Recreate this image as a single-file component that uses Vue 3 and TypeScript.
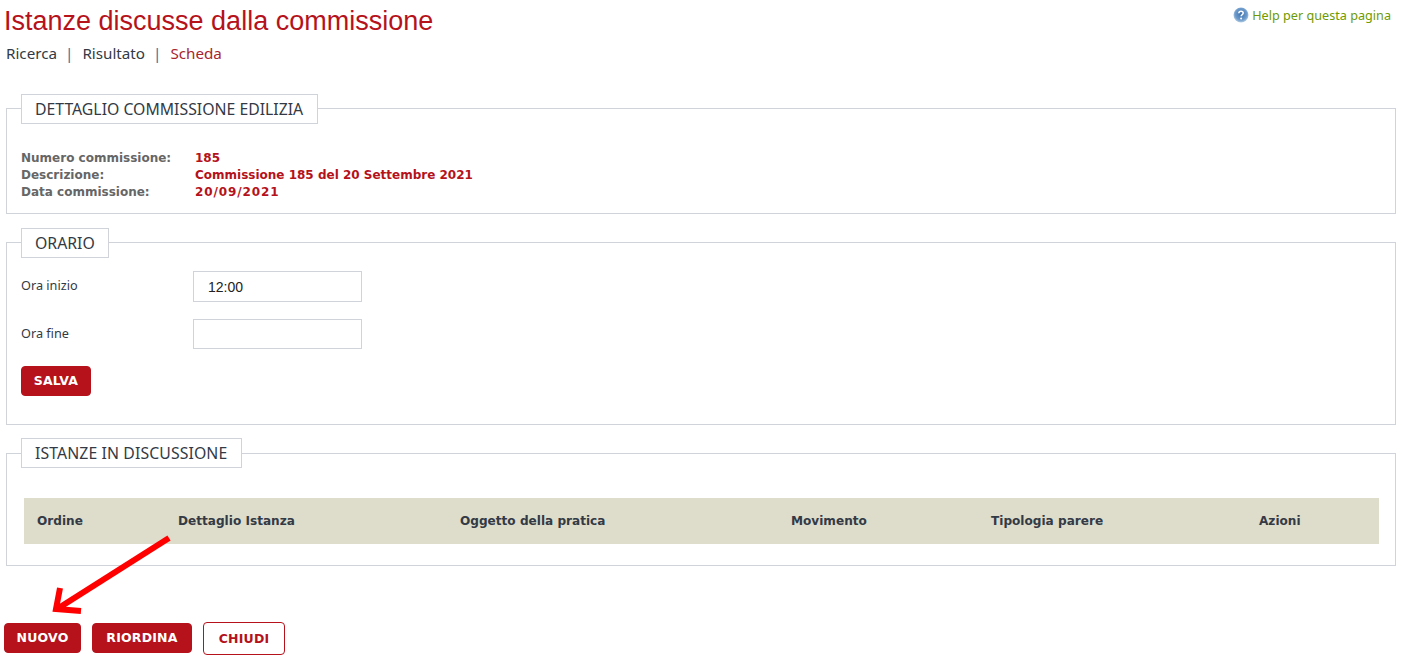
<script setup lang="ts">
interface Info { label: string; value: string }
const info: Info[] = [
  { label: 'Numero commissione:', value: '185' },
  { label: 'Descrizione:', value: 'Commissione 185 del 20 Settembre 2021' },
  { label: 'Data commissione:', value: '20/09/2021' },
]
const columns: string[] = ['Ordine', 'Dettaglio Istanza', 'Oggetto della pratica', 'Movimento', 'Tipologia parere', 'Azioni']
</script>

<template>
  <div class="page">
    <header class="top">
      <h1>Istanze discusse dalla commissione</h1>
      <a class="help">
        <svg width="16" height="16" viewBox="0 0 16 16">
          <defs>
            <radialGradient id="hg" cx="50%" cy="45%" r="55%">
              <stop offset="0" stop-color="#3f73ad" />
              <stop offset="0.7" stop-color="#6d9bcb" />
              <stop offset="1" stop-color="#b4cde4" />
            </radialGradient>
          </defs>
          <circle cx="8" cy="8" r="7.5" fill="url(#hg)" />
          <path d="M5.8 6.2C5.9 4.9 6.8 4.2 8 4.2s2.2.7 2.2 1.9c0 1-.6 1.4-1.2 1.8-.5.3-.8.6-.8 1.3" fill="none" stroke="#fff" stroke-width="1.5" />
          <circle cx="8.1" cy="11.6" r="1" fill="#fff" />
        </svg>
        Help per questa pagina
      </a>
    </header>
    <nav class="crumbs">
      <span>Ricerca</span><i>|</i><span>Risultato</span><i>|</i><span class="current">Scheda</span>
    </nav>

    <fieldset class="box detail">
      <legend>DETTAGLIO COMMISSIONE EDILIZIA</legend>
      <dl>
        <div v-for="row in info" :key="row.label" class="info-row">
          <dt>{{ row.label }}</dt>
          <dd>{{ row.value }}</dd>
        </div>
      </dl>
    </fieldset>

    <fieldset class="box orario">
      <legend>ORARIO</legend>
      <div class="field first">
        <label>Ora inizio</label>
        <input type="text" value="12:00" />
      </div>
      <div class="field second">
        <label>Ora fine</label>
        <input type="text" class="short" value="" />
      </div>
      <button class="btn solid salva">SALVA</button>
    </fieldset>

    <fieldset class="box istanze">
      <legend>ISTANZE IN DISCUSSIONE</legend>
      <div class="thead">
        <div v-for="c in columns" :key="c">{{ c }}</div>
      </div>
    </fieldset>

    <div class="actions">
      <button class="btn solid nuovo">NUOVO</button>
      <button class="btn solid riordina">RIORDINA</button>
      <button class="btn outline">CHIUDI</button>
    </div>

    <svg class="arrow" width="200" height="100" viewBox="0 0 200 100">
      <path d="M169 4 L57 75" stroke="#fe0000" stroke-width="6" fill="none" />
      <path d="M60 54 L56 75 L81 77" stroke="#fe0000" stroke-width="6" fill="none" />
    </svg>
  </div>
</template>

<style>
html, body { margin: 0; background: #fff; }
</style>

<style scoped>
.page {
  position: relative;
  box-sizing: border-box;
  width: 1403px;
  height: 667px;
  overflow: hidden;
  padding: 0 7px 0 6px;
  font-family: Tahoma, "Noto Sans", "DejaVu Sans", sans-serif;
  color: #333a45;
}
.top {
  display: flex;
  justify-content: space-between;
  align-items: flex-start;
  height: 39px;
  margin-left: -2px;
}
h1 {
  margin: 5px 0 0;
  font: 400 27px/32px "Liberation Sans", Arial, sans-serif;
  color: #b5121b;
}
.help {
  display: flex;
  align-items: center;
  gap: 3px;
  margin: 7px 5px 0 0;
  font-size: 12.65px;
  line-height: 16px;
  color: #6f9a00;
}
.crumbs {
  display: flex;
  height: 28px;
  align-items: center;
  font-size: 15.2px;
  line-height: 20px;
}
.crumbs i { font-style: normal; margin: 0 10px 0 8px; color: #2f6f9f; }
.crumbs i + span { margin-left: -1px; }
.crumbs .current { color: #a8252e; }
.box {
  margin: 0;
  border: 1px solid #d0d4da;
  padding: 0 14px;
  min-width: 0;
}
legend {
  box-sizing: border-box;
  height: 29px;
  margin: 0 0 -1px;
  padding: 0 14px 0 13px;
  border: 1px solid #d0d4da;
  border-bottom: 0;
  box-shadow: 0 1px 0 #d0d4da;
  font-size: 15.8px;
  line-height: 28px;
  background: #fff;
  color: #333a45;
}
.detail { margin-top: 27px; height: 118px; }
dl { margin: 28px 0 0; }
.info-row {
  display: flex;
  height: 17px;
  font: 700 12px/17px "DejaVu Sans", Verdana, sans-serif;
}
.info-row:last-child dd { letter-spacing: 0.9px; }
dt { width: 174px; color: #666; }
dd { margin: 0; color: #b5121b; }
.orario { margin-top: 14px; height: 195px; }
.orario legend { padding-right: 13px; }
.field { display: flex; height: 30px; margin-bottom: 18px; }
.field.first { margin-top: 15px; }
.field.second { margin-bottom: 17px; }
.field label { width: 172px; font-size: 12.7px; line-height: 29px; color: #333a45; }
.field input {
  box-sizing: border-box;
  width: 169px;
  height: 31px;
  margin: 0;
  padding: 0 14px;
  border: 1px solid #d0d4da;
  background: #fff;
  font: 400 14px "Liberation Sans", Arial, sans-serif;
  color: #222;
  outline: none;
}
.field input.short { height: 30px; }
.btn {
  box-sizing: border-box;
  height: 30px;
  border-radius: 4px;
  padding: 0;
  font: 700 12.5px/28px "DejaVu Sans", Verdana, sans-serif;
  letter-spacing: 0.2px;
  text-align: center;
  cursor: pointer;
}
.solid { background: #b5121b; border: 1px solid #b5121b; color: #fff; }
.outline { background: #fff; border: 1px solid #b5121b; color: #b5121b; width: 82px; height: 33px; }
.salva { width: 70px; }
.istanze { margin-top: 13px; height: 126px; }
.istanze legend {
  height: 30px;
  margin-bottom: 0;
  border-bottom: 1px solid #d0d4da;
  box-shadow: none;
  letter-spacing: 0.1px;
}
.thead {
  display: grid;
  grid-template-columns: 141px 282px 331px 200px 268px 1fr;
  align-items: center;
  height: 46px;
  margin: 30px 2px 0 3px;
  padding-left: 13px;
  background: #dedccb;
  font: 700 12.1px/20px "DejaVu Sans", Verdana, sans-serif;
  color: #333a45;
}
.actions {
  display: flex;
  align-items: flex-start;
  gap: 11px;
  margin: 56px 0 0 -2px;
}
.actions .solid { margin-top: 1px; }
.nuovo { width: 77px; }
.riordina { width: 100px; }
.arrow { position: absolute; left: 0; top: 534px; }
</style>
